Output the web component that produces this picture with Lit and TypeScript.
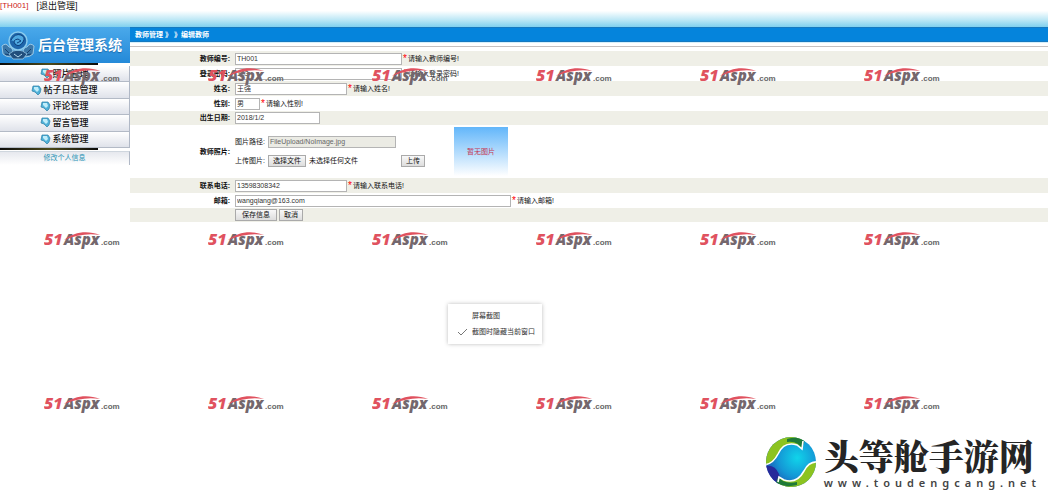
import { LitElement, html, css, svg } from "lit";
import { customElement } from "lit/decorators.js";

@customElement("site-watermark")
class SiteWatermark extends LitElement {
  static styles = css`
    :host { display: block; height: 24px; }
    svg { display: block; }
    text { font-family: "Open Sans", "Liberation Sans", sans-serif; font-style: italic; font-weight: 800; }
    .num { fill: #e0525f; font-size: 16px; }
    .word { fill: #74676d; font-size: 15px; }
    .com { fill: #666; font-family: "Liberation Sans", sans-serif; font-size: 8px; font-weight: 700; font-style: normal; }
  `;
  render() {
    return html`<svg width="80" height="24" viewBox="0 0 80 24" aria-hidden="true">
      <text class="num" x="0" y="17">51</text>
      <text class="word" x="20" y="17">Aspx</text>
      <text class="com" x="57" y="17">.com</text>
      <path d="M20 12C30 4 43 2 56 7C44 5 33 7 20 12Z" fill="#e0525f" />
    </svg>`;
  }
}

@customElement("side-menu")
class SideMenu extends LitElement {
  static styles = css`
    :host { display: block; }
    .logo { height: 36px; display: flex; align-items: center; gap: 3px; padding-left: 1px; box-sizing: border-box;
      background: linear-gradient(#4aa9ea, #2489d8); color: #fff; font-size: 14px; font-weight: 700; white-space: nowrap;
      text-shadow: 0 1px 1px #1767ad; }
    .rule { width: 98px; height: 2px; margin-bottom: 1px; background: linear-gradient(90deg, #0a0a0a, #4c4a1c 50%, #0a0a0a); }
    nav { display: grid; grid-auto-rows: 1fr; height: 82px; }
    nav a { display: flex; align-items: center; justify-content: center; gap: 1px; box-sizing: border-box;
      border-right: 1px solid #b0b8c6; border-bottom: 1px solid #b3bac6; color: #111; text-decoration: none;
      font-size: 9px; font-weight: 500; background: linear-gradient(#fff, #dfe2ea); white-space: nowrap; }
    .sub { display: block; height: 14px; line-height: 12px; box-sizing: border-box; border-right: 1px solid #b0b8c6;
      border-top: 1px solid #cfd6de; text-align: center; color: #2c93b5; text-decoration: none;
      background: linear-gradient(#e6e8ee, #fff); }
  `;
  gem() {
    return svg`<path d="M2 1H8L10 4L9 8L7 10L4 7L1 6Z" fill="#4fb0d8" stroke="#2b7fa6" stroke-width=".7"/>
      <path d="M3 2H7L8 5L6 7L3 4Z" fill="#c0edfa"/>`;
  }
  render() {
    return html`
      <div class="logo">
        <svg width="34" height="32" viewBox="0 0 34 32" aria-hidden="true">
          <path d="M1 17Q5 13 8 18Q12 18 12 24L10 28Q5 28 2 25Z" fill="#3b77a8" stroke="#b5d9ee" stroke-width=".8"/>
          <path d="M33 17Q29 13 26 18Q22 18 22 24L24 28Q29 28 32 25Z" fill="#3b77a8" stroke="#b5d9ee" stroke-width=".8"/>
          <path d="M4 20L8 24M30 20L26 24M4 25L9 26M30 25L25 26" stroke="#173f6d"/>
          <path d="M8 25Q17 17 26 25L22 30H12Z" fill="#214e7d" stroke="#9dcce8" stroke-width=".8"/>
          <path d="M13 25L17 28L21 25" fill="none" stroke="#b5d9ee"/>
          <circle cx="17" cy="12" r="9" fill="#1e66ab" stroke="#8acbed" stroke-width="1.5"/>
          <path d="M10 11Q14 4 20 6Q25 8 22 13Q18 19 14 15Q11 11 17 10L20 12L16 14" fill="#4fa8e0" stroke="#0c3f7c"/>
        </svg>
        <span>后台管理系统</span>
      </div>
      <div class="rule"></div>
      <nav>
        ${["照片管理", "帖子日志管理", "评论管理", "留言管理", "系统管理"].map(
          (t) => html`<a href="#"><svg width="11" height="11" aria-hidden="true">${this.gem()}</svg>${t}</a>`
        )}
      </nav>
      <div class="rule"></div>
      <a class="sub" href="#">修改个人信息</a>`;
  }
}

@customElement("teacher-form")
class TeacherForm extends LitElement {
  static styles = css`
    :host { display: block; }
    form { margin: 0; }
    .row { display: grid; grid-template-columns: 100px minmax(0, 1fr); column-gap: 5px; align-items: center; height: 15px; }
    .row.short { height: 14px; }
    .row.photo { height: 53px; }
    .row.odd { background: #efefe7; }
    .name { text-align: right; font-weight: 700; }
    .cell, .line { display: flex; align-items: center; white-space: nowrap; }
    .star { color: #f00; font-size: 10px; margin: 0 1px; }
    input, button { font: inherit; box-sizing: border-box; margin: 0; }
    .text { height: 12px; padding: 0 1px; border: 1px solid #b4b4b4; background: #fff; color: #333; }
    .w-full { width: 167px; } .w-mid { width: 112px; } .w-small { width: 25px; }
    .w-date { width: 85px; } .w-mail { width: 276px; } .w-path { width: 128px; }
    .text:disabled { background: #ebebe4; color: #666; }
    button { height: 12px; padding: 0 4px; border: 1px solid #aaa; background: linear-gradient(#f8f8f8, #ddd); color: #111;
      line-height: 10px; white-space: nowrap; }
    .actions { gap: 2px; }
    .actions .save { padding: 0 6px; }
    .upload { width: 190px; display: grid; gap: 7px; margin-right: 29px; }
    .line { gap: 3px; }
    .push { margin-left: auto; }
    .file { display: none; }
    .preview { width: 54px; height: 49px; display: grid; place-items: center; color: #c33552;
      background: linear-gradient(#62b6fa, #fff); }
  `;
  field(id: string, label: string, value: string, width: string, hint: string, rowClass: string) {
    return html`<div class="row ${rowClass}">
      <label class="name" for=${id}>${label}:</label>
      <div class="cell">
        <input id=${id} type="text" class="text ${width}" .value=${value} />
        ${hint ? html`<span class="star">*</span><span>${hint}</span>` : ""}
      </div>
    </div>`;
  }
  pick() {
    (this.renderRoot.querySelector("#file") as HTMLInputElement).click();
  }
  render() {
    return html`<form @submit=${(e: Event) => e.preventDefault()}>
      ${this.field("no", "教师编号", "TH001", "w-full", "请输入教师编号!", "odd")}
      ${this.field("pw", "登录密码", "123", "w-full", "请输入登录密码!", "")}
      ${this.field("nm", "姓名", "王强", "w-mid", "请输入姓名!", "odd")}
      ${this.field("sex", "性别", "男", "w-small", "请输入性别!", "")}
      ${this.field("birth", "出生日期", "2018/1/2", "w-date", "", "odd short")}
      <div class="row photo">
        <span class="name">教师照片:</span>
        <div class="cell">
          <div class="upload">
            <div class="line"><label for="path">图片路径:</label>
              <input id="path" class="text w-path" disabled value="FileUpload/NoImage.jpg" /></div>
            <div class="line"><label for="file">上传图片:</label><input id="file" class="file" type="file" />
              <button type="button" @click=${this.pick}>选择文件</button><span>未选择任何文件</span>
              <button class="push" type="button">上传</button></div>
          </div>
          <div class="preview">暂无图片</div>
        </div>
      </div>
      ${this.field("tel", "联系电话", "13598308342", "w-mid", "请输入联系电话!", "odd")}
      ${this.field("mail", "邮箱", "wangqiang@163.com", "w-mail", "请输入邮箱!", "")}
      <div class="row odd short"><span></span>
        <div class="cell actions"><button class="save" type="submit">保存信息</button><button type="reset">取消</button></div>
      </div>
    </form>`;
  }
}

@customElement("app-root")
class AppRoot extends LitElement {
  static styles = css`
    :host { display: block; position: relative; min-height: 100vh; overflow: hidden; background: #fff; color: #111;
      font: 7px/12px "Liberation Sans", "Noto Sans CJK SC", sans-serif; }
    header { height: 27px; box-sizing: border-box; display: flex; gap: 8px; font-size: 8px; line-height: 12px;
      background: linear-gradient(#fff 40%, #b9e6f5 75%, #7fd0ee); }
    .user { color: #c22; }
    header a { color: #111; text-decoration: none; font-size: 9px; }
    .body { display: grid; grid-template-columns: 130px minmax(0, 1fr); align-items: start; }
    .crumb { height: 15px; box-sizing: border-box; line-height: 13px; padding-left: 5px; background: #0584dc; color: #fff;
      font-weight: 700; border-top: 1px solid #1579c0; border-bottom: 1px solid #1579c0; }
    .bar { height: 3px; margin-bottom: 4px; border-top: 1px solid #d5effa; border-bottom: 1px solid #c4c0c0; }
    .marks { position: absolute; left: 44px; top: 64px; display: grid; grid-template-columns: repeat(6, 80px);
      column-gap: 84px; row-gap: 140px; pointer-events: none; }
    .menu { position: absolute; left: 448px; top: 304px; box-sizing: border-box; padding: 4px 7px 4px 8px; background: #fff;
      box-shadow: 0 0 4px #bbb; white-space: nowrap; }
    .item { display: grid; grid-template-columns: 12px auto; column-gap: 4px; align-items: center; height: 16px; color: #333; }
    .brand { position: absolute; right: 7px; bottom: 10px; display: flex; align-items: center; gap: 7px; }
    .brand-name { font: 900 35px/42px "Noto Serif CJK SC", "Noto Sans CJK SC", serif; color: #252525; white-space: nowrap; }
    .brand-url { font: 600 11px/14px "Noto Sans", sans-serif; letter-spacing: 5px; color: #444; white-space: nowrap; }
  `;
  render() {
    return html`
      <header><span class="user">[TH001]</span><a href="#">[退出管理]</a></header>
      <div class="body">
        <side-menu></side-menu>
        <main>
          <div class="crumb">教师管理 》 》编辑教师</div>
          <div class="bar"></div>
          <teacher-form></teacher-form>
        </main>
      </div>
      <div class="marks">${Array.from({ length: 18 }, () => html`<site-watermark></site-watermark>`)}</div>
      <div class="menu">
        <div class="item"><span></span><span>屏幕截图</span></div>
        <div class="item"><svg width="12" height="10" aria-hidden="true"><path d="M2 5L5 8L11 2" fill="none" stroke="#777"/></svg>
          <span>截图时隐藏当前窗口</span></div>
      </div>
      <div class="brand">
        <svg width="52" height="52" viewBox="0 0 52 52" aria-hidden="true">
          <defs>
            <radialGradient id="sea" cx="62%" cy="42%" r="65%">
              <stop offset="0" stop-color="#10d4ea" /><stop offset=".55" stop-color="#1498d6" /><stop offset="1" stop-color="#1b4fb0" />
            </radialGradient>
            <clipPath id="ball"><circle cx="26" cy="26" r="25" /></clipPath>
          </defs>
          <g clip-path="url(#ball)">
            <rect width="52" height="52" fill="url(#sea)" />
            <path d="M0 30Q10 28 14 38L16 46L8 52H0Z" fill="#262a9a" />
            <path d="M-2 29Q8 28 13 18Q19 4 34 9L36 12L38 -2H-2Z" fill="#8cc320" />
            <path d="M22 3Q32 0 40 4L37 12L33 8Q28 5 22 6Z" fill="#1f7a38" />
            <path d="M54 26Q44 25 39 35Q32 49 17 43L14 41L13 54H54Z" fill="#8cc320" />
            <path d="M32 49Q20 52 11 47L13 41L18 45Q24 48 32 46Z" fill="#1f7a38" />
            <path d="M-1 29Q8 28 13 18Q19 5 32 9L37 13L38 5M53 26Q44 25 39 35Q32 48 19 44L14 41L13 46"
              fill="none" stroke="#fff" stroke-width="1.6" />
          </g>
        </svg>
        <div><div class="brand-name">头等舱手游网</div><div class="brand-url">www.toudengcang.net</div></div>
      </div>`;
  }
}
